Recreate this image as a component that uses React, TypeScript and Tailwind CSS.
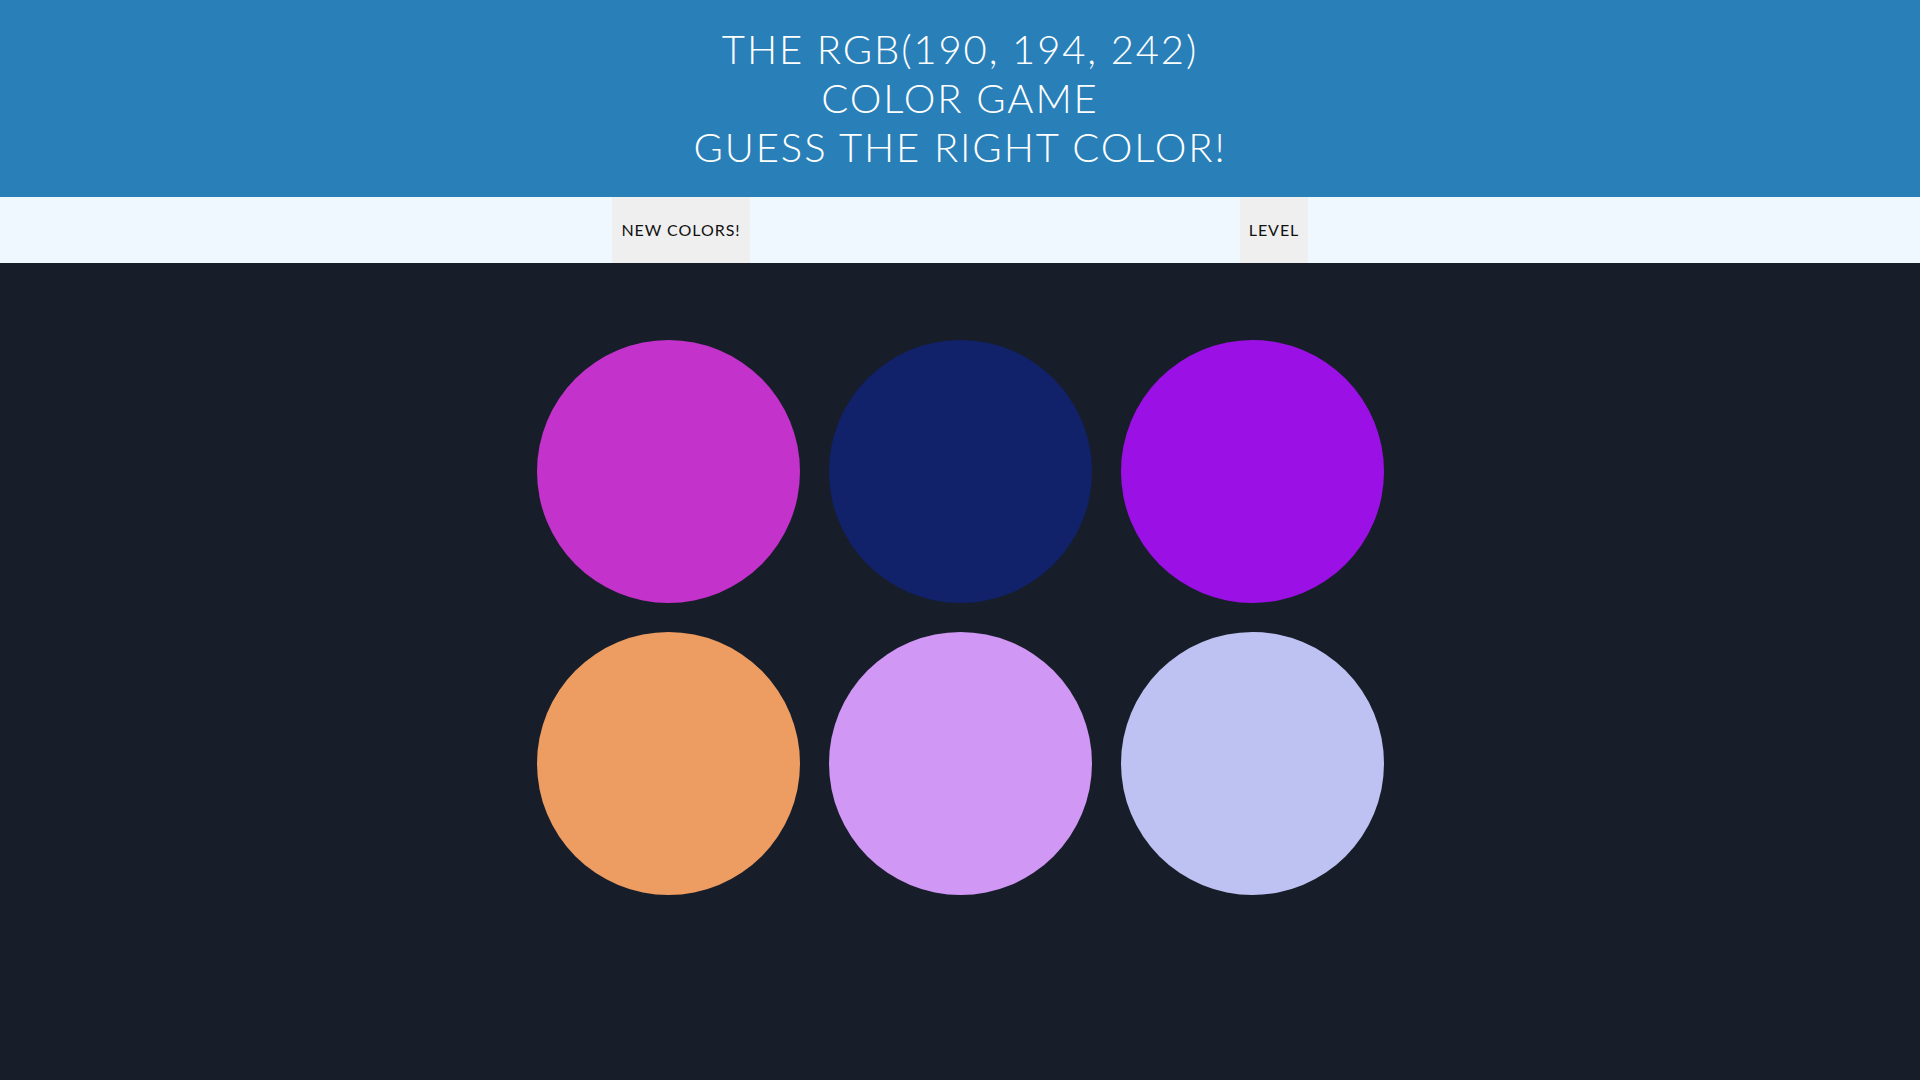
import React from "react";

const colors = [
  "rgb(195, 50, 202)",
  "rgb(17, 34, 106)",
  "rgb(155, 16, 228)",
  "rgb(237, 156, 98)",
  "rgb(208, 151, 245)",
  "rgb(190, 194, 242)",
];

export default function App() {
  return (
    <div className="min-h-screen bg-[#171e29] font-['Lato',sans-serif]">
      <header className="bg-[#2980b9] h-[197px] flex flex-col justify-center items-center text-white font-light uppercase text-[40px] leading-[49px] tracking-[0.047em]">
        <span>The RGB(190, 194, 242)</span>
        <span>Color Game</span>
        <span>Guess the right color!</span>
      </header>

      <nav className="bg-[#f0f8ff] h-[66px]">
        <div className="w-[696px] h-full mx-auto flex justify-between">
          <button className="h-full w-[138px] bg-[#efefef] text-[#111] text-[16px] font-normal tracking-[0.06em] uppercase">
            New Colors!
          </button>
          <button className="h-full w-[68px] bg-[#efefef] text-[#111] text-[16px] font-normal tracking-[0.06em] uppercase">
            Level
          </button>
        </div>
      </nav>

      <div className="pt-[77px] grid grid-cols-[repeat(3,263px)] justify-center gap-[29px]">
        {colors.map((c) => (
          <div key={c} className="w-[263px] h-[263px] rounded-full" style={{ backgroundColor: c }} />
        ))}
      </div>
    </div>
  );
}
